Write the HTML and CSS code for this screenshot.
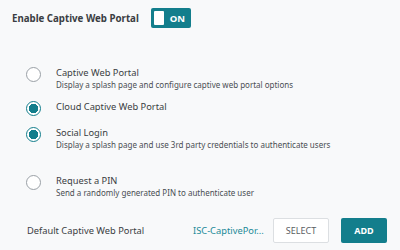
FILE: index.html
```html
<!DOCTYPE html>
<html lang="en">
<head>
  <meta charset="UTF-8">
  <title>Captive Web Portal</title>
  <link rel="stylesheet" href="styles.css">
</head>
<body>
  <div class="enable-row">
    <span class="enable-label">Enable Captive Web Portal</span>
    <span class="toggle"><span class="knob"></span><span class="toggle-text">ON</span></span>
  </div>

  <div class="options">
    <div class="option">
      <span class="radio"></span>
      <div class="option-text">
        <div class="option-title">Captive Web Portal</div>
        <div class="option-desc">Display a splash page and configure captive web portal options</div>
      </div>
    </div>
    <div class="option">
      <span class="radio checked"></span>
      <div class="option-text">
        <div class="option-title">Cloud Captive Web Portal</div>
      </div>
    </div>
    <div class="option">
      <span class="radio checked"></span>
      <div class="option-text">
        <div class="option-title">Social Login</div>
        <div class="option-desc">Display a splash page and use 3rd party credentials to authenticate users</div>
      </div>
    </div>
    <div class="option pin">
      <span class="radio"></span>
      <div class="option-text">
        <div class="option-title">Request a PIN</div>
        <div class="option-desc">Send a randomly generated PIN to authenticate user</div>
      </div>
    </div>
  </div>

  <div class="default-row">
    <span class="default-label">Default Captive Web Portal</span>
    <span class="portal-name">ISC-CaptivePor...</span>
    <button class="btn btn-select">SELECT</button>
    <button class="btn btn-add">ADD</button>
  </div>
</body>
</html>
```

FILE: styles.css
```css
body {
  margin: 0;
  padding: 8px 12px 0 12px;
  font-family: 'Noto Sans', 'Open Sans', sans-serif;
  background-color: #f8f9fa;
  color: #3b3f44;
}
.enable-row {
  display: flex;
  align-items: center;
  height: 20px;
}
.enable-label {
  font-weight: 700;
  font-size: 9.7px;
  color: #3a3d42;
}
.toggle {
  display: flex;
  align-items: center;
  margin-left: 12px;
  width: 40px;
  height: 20px;
  box-sizing: border-box;
  padding: 3px;
  background-color: #137e8c;
  border-radius: 2px;
}
.knob {
  width: 10px;
  height: 14px;
  background-color: #fff;
  border-radius: 1px;
}
.toggle-text {
  margin-left: 6px;
  color: #fff;
  font-weight: 700;
  font-size: 9.5px;
}
.options {
  margin-top: 38px;
  padding-left: 14px;
}
.option {
  display: flex;
  align-items: flex-start;
  margin-bottom: 10px;
}
.option.pin {
  margin-top: 24px;
}
.radio {
  flex: none;
  width: 15px;
  height: 15px;
  box-sizing: border-box;
  border: 1px solid #9aa0a6;
  border-radius: 50%;
  background-color: #fff;
  margin-top: 1px;
  margin-right: 15px;
}
.radio.checked {
  border-color: #137e8c;
  background: radial-gradient(circle, #137e8c 0 4.5px, #fff 5px);
}
.option-title {
  font-size: 9.3px;
  line-height: 13px;
  color: #3a3d42;
}
.option-desc {
  font-size: 8px;
  line-height: 11px;
  color: #4a4e53;
}
.default-row {
  display: flex;
  align-items: center;
  margin-top: 20px;
  padding-left: 15px;
}
.default-label {
  font-size: 9.3px;
  color: #3a3d42;
  width: 166px;
}
.portal-name {
  font-size: 9.3px;
  color: #1b8a98;
  width: 80px;
}
.btn {
  font-family: 'Noto Sans', 'Open Sans', sans-serif;
  font-size: 9px;
  height: 25px;
  border-radius: 2px;
  padding: 0;
}
.btn-select {
  width: 56px;
  background-color: #fff;
  border: 1px solid #dcdfe2;
  color: #5a5e63;
}
.btn-add {
  width: 46px;
  margin-left: 12px;
  background-color: #137e8c;
  border: none;
  color: #fff;
  font-weight: 700;
}
```
